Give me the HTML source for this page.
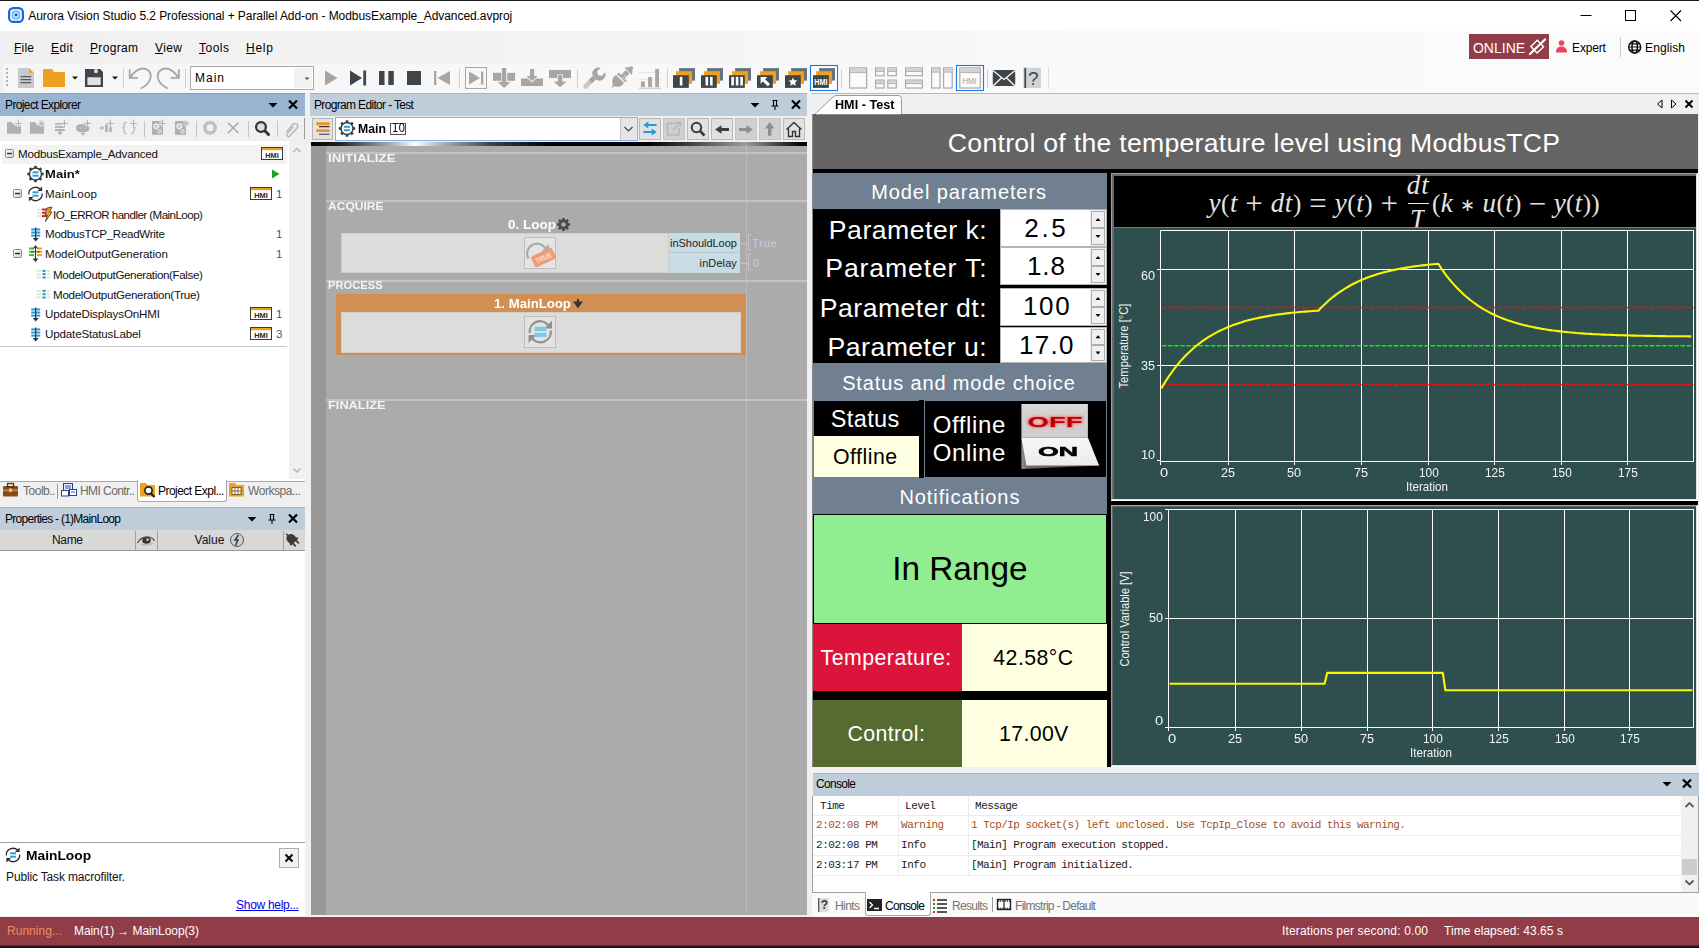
<!DOCTYPE html><html><head><meta charset="utf-8"><title>Aurora Vision Studio</title><style>
html,body{margin:0;padding:0}
body{width:1699px;height:948px;overflow:hidden;background:#f0f0f0;font-family:"Liberation Sans",sans-serif;position:relative}
div,svg.a,span.t{position:absolute;box-sizing:border-box}
span.t{white-space:nowrap;line-height:20px;height:20px}
u{text-decoration:underline;text-underline-offset:1px}
</style></head><body>
<div style="left:0px;top:0px;width:1699px;height:1px;background:#1a1a1a;"></div>
<div style="left:0px;top:1px;width:1699px;height:30px;background:#ffffff;"></div>
<div style="left:0px;top:31px;width:1699px;height:62px;background:linear-gradient(90deg,#f0f0f0 0%,#f3f3f3 30%,#f9f9f9 65%,#fbfbfb 100%);"></div>
<div style="left:1469px;top:34px;width:80px;height:25px;background:#913d47;"></div>
<div style="left:1620px;top:37px;width:1px;height:20px;background:#c9c9c9;"></div>
<div style="left:3px;top:64px;width:1045px;height:29px;background:linear-gradient(90deg,#f6f6f6,#f9f9f9);border-radius:3px;"></div>
<div style="left:190px;top:66px;width:124px;height:24px;background:#fff;border:1px solid #a9a9a9;"></div>
<div style="left:294px;top:68px;width:18px;height:20px;background:#f2f2f2;"></div>
<div style="left:0px;top:93px;width:305px;height:23px;background:#99b4d1;border-top:1px solid #8aa0bb;"></div>
<div style="left:0px;top:116px;width:305px;height:25px;background:#f0f0f0;"></div>
<div style="left:0px;top:141px;width:305px;height:340px;background:#fff;"></div>
<div style="left:289px;top:141px;width:16px;height:338px;background:#f0f0f0;"></div>
<div style="left:304px;top:118px;width:1px;height:21px;background:#9c9c9c;"></div>
<div style="left:2px;top:145px;width:285px;height:19px;background:#f3f3f3;"></div>
<div style="left:0px;top:346px;width:287px;height:1px;background:#c8c8c8;"></div>
<div style="left:0px;top:481px;width:305px;height:22px;background:#f0f0f0;"></div>
<div style="left:137px;top:480px;width:89.5px;height:22px;background:#fff;border:1px solid #a8a8a8;border-top:none;border-radius:0 0 3px 3px;"></div>
<div style="left:0px;top:481px;width:137px;height:1px;background:#a8a8a8;"></div>
<div style="left:226px;top:481px;width:79px;height:1px;background:#a8a8a8;"></div>
<div style="left:57px;top:484px;width:1px;height:15px;background:#9a9a9a;"></div>
<div style="left:0px;top:507px;width:305px;height:23px;background:#bfcddb;border-top:1px solid #a8b4c0;"></div>
<div style="left:0px;top:530px;width:305px;height:21px;background:#d8d8d8;border-bottom:1px solid #9a9a9a;"></div>
<div style="left:135px;top:531px;width:1px;height:19px;background:#a0a0a0;"></div>
<div style="left:157px;top:531px;width:1px;height:19px;background:#a0a0a0;"></div>
<div style="left:283px;top:531px;width:1px;height:19px;background:#a0a0a0;"></div>
<div style="left:0px;top:551px;width:305px;height:291px;background:#fff;"></div>
<div style="left:0px;top:842px;width:305px;height:1px;background:#a0a0a0;"></div>
<div style="left:0px;top:843px;width:305px;height:73px;background:#fff;"></div>
<div style="left:279px;top:848px;width:20px;height:20px;background:#f2f2f2;border:1px solid #adadad;"></div>
<div style="left:310px;top:93px;width:498px;height:23px;background:#bfcddb;border-top:1px solid #a8b4c0;"></div>
<div style="left:310px;top:116px;width:498px;height:26px;background:#f0f0f0;"></div>
<div style="left:312px;top:118px;width:21px;height:22px;background:#e3e3e3;border:1px solid #b5b5b5;"></div>
<div style="left:335px;top:117px;width:303px;height:24px;background:#fff;border:1px solid #7eb4ea;"></div>
<div style="left:620px;top:118px;width:17px;height:22px;background:#e6e6e6;border-left:1px solid #c0c0c0;"></div>
<div style="left:390px;top:123px;width:16px;height:12px;background:#fff;border:1px solid #555;"></div>
<div style="left:639px;top:118px;width:22px;height:22px;background:#e1e1e1;border:1px solid #b8b8b8;"></div>
<div style="left:687px;top:118px;width:22px;height:22px;background:#e1e1e1;border:1px solid #b8b8b8;"></div>
<div style="left:711px;top:118px;width:22px;height:22px;background:#e1e1e1;border:1px solid #b8b8b8;"></div>
<div style="left:783px;top:118px;width:22px;height:22px;background:#e1e1e1;border:1px solid #b8b8b8;"></div>
<div style="left:663px;top:118px;width:22px;height:22px;background:#d0d0d0;border:1px solid #c4c4c4;"></div>
<div style="left:735px;top:118px;width:22px;height:22px;background:#d0d0d0;border:1px solid #c4c4c4;"></div>
<div style="left:759px;top:118px;width:22px;height:22px;background:#d0d0d0;border:1px solid #c4c4c4;"></div>
<div style="left:311px;top:142px;width:495.5px;height:4px;background:linear-gradient(90deg,#000 0%,#222 6%,#c8c8c8 18%,#fff 21%,#c8c8c8 24.500%,#444 36%,#000 48%,#000 68%,#555 79%,#9c9c9c 87.700%,#444 94%,#000 99%,#000 100%);"></div>
<div style="left:311px;top:146px;width:496px;height:769px;background:#ababab;"></div>
<div style="left:311px;top:146px;width:15px;height:769px;background:#989898;"></div>
<div style="left:746px;top:146px;width:1px;height:769px;background:#bdbdbd;"></div>
<div style="left:326px;top:152px;width:481px;height:2px;background:#c3c3c3;"></div>
<div style="left:326px;top:200px;width:481px;height:2px;background:#c3c3c3;"></div>
<div style="left:326px;top:280px;width:481px;height:2px;background:#c3c3c3;"></div>
<div style="left:326px;top:399px;width:481px;height:2px;background:#c3c3c3;"></div>
<div style="left:807px;top:93px;width:5px;height:823px;background:#f0f0f0;"></div>
<div style="left:341px;top:233px;width:328px;height:40px;background:#dcdcda;border:1px solid #cfcfcd;"></div>
<div style="left:524px;top:237px;width:32px;height:32px;background:#e4e4e2;border:1px solid #bdbdbd;"></div>
<div style="left:669px;top:233px;width:71px;height:20px;background:#c8dce3;border-bottom:1px solid #b4c6ce;"></div>
<div style="left:669px;top:253px;width:71px;height:20px;background:#c8dce3;"></div>
<div style="left:336px;top:294px;width:409.5px;height:61px;background:#d28f54;"></div>
<div style="left:341px;top:311.5px;width:400px;height:41px;background:#dcdcda;border:1px solid #cfcfcd;"></div>
<div style="left:524px;top:316px;width:32px;height:32px;background:#e4e4e2;border:1px solid #bdbdbd;"></div>
<div style="left:812px;top:93px;width:887px;height:21px;background:#f0f0f0;border-top:1px solid #b9b9b9;"></div>
<div style="left:812px;top:114px;width:1px;height:654px;background:#8a8a8a;"></div>
<div style="left:813px;top:114px;width:885px;height:654px;background:#000;"></div>
<div style="left:813px;top:114px;width:885px;height:55px;background:#646464;"></div>
<div style="left:813px;top:173px;width:294px;height:36px;background:#708090;"></div>
<div style="left:1000px;top:209px;width:107px;height:38px;background:#fff;border:1px solid #b4b4b4;"></div>
<div style="left:1090px;top:210px;width:16px;height:36px;background:#f0f0f0;"></div>
<div style="left:1091px;top:211px;width:14px;height:17.0px;background:#f0f0f0;border:1px solid #adadad;"></div>
<div style="left:1091px;top:228.0px;width:14px;height:17.0px;background:#f0f0f0;border:1px solid #adadad;"></div>
<div style="left:1000px;top:247px;width:107px;height:38px;background:#fff;border:1px solid #b4b4b4;"></div>
<div style="left:1090px;top:248px;width:16px;height:36px;background:#f0f0f0;"></div>
<div style="left:1091px;top:249px;width:14px;height:17.0px;background:#f0f0f0;border:1px solid #adadad;"></div>
<div style="left:1091px;top:266.0px;width:14px;height:17.0px;background:#f0f0f0;border:1px solid #adadad;"></div>
<div style="left:1000px;top:288px;width:107px;height:38px;background:#fff;border:1px solid #b4b4b4;"></div>
<div style="left:1090px;top:289px;width:16px;height:36px;background:#f0f0f0;"></div>
<div style="left:1091px;top:290px;width:14px;height:17.0px;background:#f0f0f0;border:1px solid #adadad;"></div>
<div style="left:1091px;top:307.0px;width:14px;height:17.0px;background:#f0f0f0;border:1px solid #adadad;"></div>
<div style="left:1000px;top:326.5px;width:107px;height:36.5px;background:#fff;border:1px solid #b4b4b4;"></div>
<div style="left:1090px;top:327.5px;width:16px;height:34.5px;background:#f0f0f0;"></div>
<div style="left:1091px;top:328.5px;width:14px;height:16.25px;background:#f0f0f0;border:1px solid #adadad;"></div>
<div style="left:1091px;top:344.75px;width:14px;height:16.25px;background:#f0f0f0;border:1px solid #adadad;"></div>
<div style="left:813px;top:363px;width:294px;height:38px;background:#708090;"></div>
<div style="left:813px;top:401px;width:294px;height:77px;background:#708090;"></div>
<div style="left:814px;top:401px;width:105px;height:35px;background:#000;"></div>
<div style="left:814px;top:436px;width:105px;height:41px;background:#ffffe1;"></div>
<div style="left:919px;top:400px;width:5px;height:78px;background:#000;"></div>
<div style="left:925px;top:401px;width:181px;height:76px;background:#000;"></div>
<div style="left:813px;top:478px;width:294px;height:36px;background:#708090;"></div>
<div style="left:813px;top:514px;width:294px;height:110px;background:#90ee90;border:1px solid #000;"></div>
<div style="left:813px;top:624px;width:149px;height:67px;background:#dc143c;"></div>
<div style="left:962px;top:624px;width:145px;height:67px;background:#ffffe1;"></div>
<div style="left:813px;top:700px;width:149px;height:67px;background:#556b2f;"></div>
<div style="left:962px;top:700px;width:145px;height:67px;background:#ffffe1;"></div>
<div style="left:812px;top:767px;width:887px;height:6px;background:#f0f0f0;"></div>
<div style="left:1111px;top:173px;width:587px;height:328px;background:#fff;"></div>
<div style="left:1111px;top:173px;width:586px;height:327px;background:#a0a0a0;"></div>
<div style="left:1112px;top:174px;width:585px;height:326px;background:#e3e3e3;"></div>
<div style="left:1112px;top:174px;width:584px;height:325px;background:#696969;"></div>
<div style="left:1114px;top:176px;width:582px;height:52px;background:#000;"></div>
<div style="left:1114px;top:227px;width:582px;height:1px;background:#7a7a7a;"></div>
<div style="left:1114px;top:228px;width:582px;height:271px;background:#2f4f4f;"></div>
<div style="left:1111px;top:505px;width:587px;height:262px;background:#fff;"></div>
<div style="left:1111px;top:505px;width:586px;height:261px;background:#a0a0a0;"></div>
<div style="left:1112px;top:506px;width:585px;height:260px;background:#e3e3e3;"></div>
<div style="left:1112px;top:506px;width:584px;height:259px;background:#696969;"></div>
<div style="left:1113px;top:507px;width:583px;height:258px;background:#2f4f4f;"></div>
<div style="left:1407.5px;top:203px;width:21px;height:1px;background:#e8e8e8;"></div>
<div style="left:813px;top:773px;width:886px;height:23px;background:#bfcddb;border-top:1px solid #a8b4c0;"></div>
<div style="left:812px;top:796px;width:887px;height:97px;background:#fff;border:1px solid #a0a0a0;border-top:none;"></div>
<div style="left:1681px;top:796px;width:17px;height:96px;background:#f0f0f0;"></div>
<div style="left:1682px;top:858.5px;width:15px;height:16px;background:#cdcdcd;"></div>
<div style="left:813px;top:815px;width:868px;height:1px;background:#ececec;"></div>
<div style="left:813px;top:835px;width:868px;height:1px;background:#ececec;"></div>
<div style="left:813px;top:855px;width:868px;height:1px;background:#ececec;"></div>
<div style="left:813px;top:875px;width:868px;height:1px;background:#ececec;"></div>
<div style="left:898px;top:796px;width:1px;height:80px;background:#ececec;"></div>
<div style="left:968px;top:796px;width:1px;height:80px;background:#ececec;"></div>
<div style="left:812px;top:893px;width:887px;height:24px;background:#fafafa;"></div>
<div style="left:864.5px;top:892px;width:66px;height:23.5px;background:#fff;border:1px solid #a8a8a8;border-top:none;border-radius:0 0 3px 3px;"></div>
<div style="left:992px;top:897px;width:1px;height:15px;background:#9a9a9a;"></div>
<div style="left:0px;top:917px;width:1699px;height:27.5px;background:#913d47;"></div>
<div style="left:0px;top:944.5px;width:1699px;height:3.5px;background:linear-gradient(#5a4a4c,#222 35%,#111);"></div>
<svg class="a" style="left:0;top:0" width="1699" height="948" viewBox="0 0 1699 948">
<rect x="9.100" y="8.100" width="13.800" height="13.800" rx="4.200" fill="#fff" stroke="#0b6be2" stroke-width="2.200"/><rect x="11.600" y="10.600" width="8.800" height="8.800" rx="2.600" fill="#86bbf7"/><rect x="13.300" y="12.300" width="5.400" height="5.400" rx="1.800" fill="#b9d8fb"/><rect x="14.900" y="13.800" width="2.300" height="2.300" rx="0.700" fill="#1d3f8f"/>
<path d="M1580.5 15.5h11" stroke="#000" stroke-width="1" fill="none"/><rect x="1625.5" y="10.5" width="10" height="10" fill="none" stroke="#000" stroke-width="1"/><path d="M1670.5 10.5l10.5 10.5M1681 10.5l-10.5 10.5" stroke="#000" stroke-width="1.1" fill="none"/>
<g stroke="#fff" fill="none"><rect x="1532.700" y="42.200" width="9" height="9" stroke-width="1.400" transform="rotate(-44 1537.200 46.700)"/><path d="M1530 54l15-14.500" stroke-width="2.200" stroke-linecap="round"/></g>
<circle cx="1561.5" cy="43" r="2.8" fill="#f0405a"/><path d="M1556 52.5c0-4.2 2.3-6 5.5-6s5.5 1.8 5.5 6z" fill="#f0405a"/>
<g stroke="#111" stroke-width="1.500" fill="none"><circle cx="1634.700" cy="47" r="6"/><ellipse cx="1634.700" cy="47" rx="2.700" ry="6"/><path d="M1628.700 47h12M1629.800 43.800h9.800M1629.800 50.200h9.800" stroke-width="1.200"/></g>
<g fill="#b4b4b4"><rect x="6" y="68" width="2" height="2"/><rect x="6" y="72" width="2" height="2"/><rect x="6" y="76" width="2" height="2"/><rect x="6" y="80" width="2" height="2"/><rect x="6" y="84" width="2" height="2"/></g>
<path d="M18 68h11l5 5v15h-16z" fill="#c6cacf"/><path d="M29 68l5 5h-5z" fill="#eda11f"/><path d="M20.5 76.700h10.700M20.5 79.700h10.700M20.5 82.700h10.700" stroke="#3a3f45" stroke-width="1"/>
<path d="M43 69h9l2 3h11v15h-22z" fill="#eda11f"/>
<path d="M72 76.5h6l-3 3z" fill="#111"/>
<path d="M85 69h15l3 3v15h-18z" fill="#3f454a"/><rect x="94.200" y="69.300" width="3.500" height="3.600" fill="#dfe2e5"/><rect x="87.400" y="77.300" width="13.300" height="7.800" fill="#dfe2e5"/>
<path d="M112 76.5h6l-3 3z" fill="#111"/>
<path d="M123.5 69v19" stroke="#cfcfcf"/>
<g stroke="#a6a6a6" stroke-width="1.8" fill="none"><path d="M129.700 69.300v8.600h8.200"/><path d="M130.500 77.300C135 69.500 143 66.200 148 70.300C153.500 75 150.500 84 140.700 88.500"/></g>
<g stroke="#a6a6a6" stroke-width="1.8" fill="none"><path d="M178.800 69.300v8.600h-8.200"/><path d="M178 77.300C173.500 69.500 165.500 66.200 160.500 70.300C155 75 158 84 167.800 88.500"/></g>
<path d="M185.5 69v19" stroke="#cfcfcf"/>
<path d="M304.5 77.5h5l-2.5 2.5z" fill="#555"/>
<path d="M325 70.5l12.5 7.5l-12.5 7.5z" fill="#a6a6a6"/>
<path d="M350 70.5l12 7.5l-12 7.5z" fill="#3f454a"/><rect x="363.3" y="70.5" width="2.8" height="15" fill="#3f454a"/>
<rect x="379" y="71" width="5.5" height="14" fill="#3f454a"/><rect x="388.3" y="71" width="5.5" height="14" fill="#3f454a"/>
<rect x="407" y="71" width="14" height="14" fill="#3f454a"/>
<rect x="434" y="71" width="2.3" height="14" fill="#a6a6a6"/><path d="M450 71v14l-12.5-7z" fill="#a6a6a6"/>
<path d="M459.5 69v19" stroke="#cfcfcf"/>
<rect x="465.5" y="67.5" width="21" height="21" fill="#f7f7f7" stroke="#a6a6a6"/><path d="M469 71.5l11 6.5l-11 6.5z" fill="#a6a6a6"/><rect x="481" y="71.5" width="2.3" height="13" fill="#a6a6a6"/>
<g fill="#a6a6a6"><rect x="493" y="72.800" width="8.300" height="8"/><rect x="507.300" y="72.800" width="7.800" height="8"/><rect x="501.900" y="68" width="4.300" height="15"/><path d="M497.600 82h12.900l-6.450 6z"/></g>
<g fill="#a6a6a6"><rect x="521" y="78.500" width="22" height="7.500"/><path d="M526 75.500h12.200l-6.100 6z" stroke="#f7f7f7" stroke-width="1.400"/><rect x="530" y="69" width="4.200" height="8"/><path d="M526.500 76h11.200l-5.600 5z"/></g>
<g fill="#a6a6a6"><rect x="549" y="70" width="22" height="8"/><rect x="557.100" y="74.500" width="5.900" height="4" fill="#f7f7f7"/><rect x="557.800" y="75.200" width="4.500" height="7"/><path d="M553.500 81.400h13.100l-6.550 5.800z"/></g>
<path d="M577.5 69v19" stroke="#cfcfcf"/>
<path d="M585.500 86.500l7.800-7.800" stroke="#c6c6c6" stroke-width="4.600" stroke-linecap="round"/><path d="M590.500 81.500l4-4" stroke="#a6a6a6" stroke-width="4.600"/><path d="M592.300 74.500a6.300 6.300 0 0 1 8.500-6.700l-3.800 3.800l1 3.400l3.400 1l3.800-3.800a6.300 6.300 0 0 1-8.400 7.900z" fill="#a6a6a6"/>
<g fill="#a6a6a6"><path d="M611.500 87.800l1.300-3.300a7.500 7.500 0 0 1 3.200-9.500l8 8a7.500 7.500 0 0 1-9.500 3.200z"/><path d="M617.200 74.200l1.600-1.600l8 8l-1.600 1.600z"/><path d="M620.500 75.500l5.500-5.500l3.500 3.500l-5.500 5.500z"/><path d="M624.500 67.500l8.300-.8l-.8 8.300z"/><path d="M630.500 66.500l2.300 2.300" stroke="#a6a6a6" stroke-width="1.500"/></g><path d="M621.500 76.700l3 3M623.500 74.700l3 3" stroke="#f7f7f7" stroke-width="0.900"/>
<path d="M639 72.600h22M639 79.700h22" stroke="#dedede" stroke-width="0.800"/><g fill="#a6a6a6"><rect x="641" y="81.400" width="3.800" height="5.600"/><rect x="648.100" y="77" width="3.800" height="10"/><rect x="655.200" y="69" width="3.800" height="18"/></g><rect x="639" y="87.600" width="22" height="1.300" fill="#c9c9c9"/>
<path d="M667.5 69v19" stroke="#cfcfcf"/>
<rect x="810.500" y="65.500" width="27" height="25" fill="#fbfcfe" stroke="#1a7ae0" stroke-width="1.100"/>
<rect x="679.1" y="68.100" width="15.900" height="12.500" fill="#69727a"/><rect x="676.1" y="71.200" width="15.900" height="12.600" fill="#eda11f"/><rect x="673" y="75.200" width="15.800" height="12.700" fill="#3f454a"/><rect x="679.80" y="76.900" width="2.6" height="8.600" fill="#fff"/>
<rect x="707.1" y="68.100" width="15.900" height="12.500" fill="#69727a"/><rect x="704.1" y="71.200" width="15.900" height="12.600" fill="#eda11f"/><rect x="701" y="75.200" width="15.800" height="12.700" fill="#3f454a"/><rect x="705.55" y="76.900" width="2.6" height="8.600" fill="#fff"/><rect x="710.05" y="76.900" width="2.6" height="8.600" fill="#fff"/>
<rect x="735.1" y="68.100" width="15.900" height="12.500" fill="#69727a"/><rect x="732.1" y="71.200" width="15.900" height="12.600" fill="#eda11f"/><rect x="729" y="75.200" width="15.800" height="12.700" fill="#3f454a"/><rect x="731.30" y="76.900" width="2.6" height="8.600" fill="#fff"/><rect x="735.80" y="76.900" width="2.6" height="8.600" fill="#fff"/><rect x="740.30" y="76.900" width="2.6" height="8.600" fill="#fff"/>
<rect x="763.1" y="68.100" width="15.900" height="12.500" fill="#69727a"/><rect x="760.1" y="71.200" width="15.900" height="12.600" fill="#eda11f"/><rect x="757" y="75.200" width="15.800" height="12.700" fill="#3f454a"/><path d="M760.6 76.900h6.800l-2.300 2.300l4.900 4.900l-2.200 2.200l-4.900-4.900l-2.300 2.300z" fill="#fff"/>
<rect x="791.1" y="68.100" width="15.900" height="12.500" fill="#69727a"/><rect x="788.1" y="71.200" width="15.900" height="12.600" fill="#eda11f"/><rect x="785" y="75.200" width="15.800" height="12.700" fill="#3f454a"/><path d="M793 77.400l1.300 2.900l3.100.3l-2.300 2.100l.7 3.100l-2.800-1.600l-2.800 1.600l.7-3.100l-2.300-2.100l3.100-.3z" fill="#fff"/>
<rect x="819.1" y="68.100" width="15.900" height="12.500" fill="#69727a"/><rect x="816.1" y="71.200" width="15.900" height="12.600" fill="#eda11f"/><rect x="813" y="75.200" width="15.800" height="12.700" fill="#3f454a"/><rect x="813" y="76" width="15.800" height="1" fill="#3f454a"/><text x="820.9" y="85.200" font-family='"Liberation Sans",sans-serif' font-size="8.400" font-weight="700" fill="#fff" text-anchor="middle" textLength="13.200" lengthAdjust="spacingAndGlyphs">HMI</text>
<path d="M841.500 69v19" stroke="#cfcfcf"/>
<rect x="849.6" y="67.89999999999999" width="17.0" height="20.1" fill="#fbfbfb" stroke="#a9a9a9" stroke-width="1.200"/><rect x="850.2" y="68.5" width="15.799999999999999" height="3.7" fill="#d3d3d3"/><path d="M850 72.60000000000001h16.2" stroke="#a9a9a9" stroke-width="0.900"/>
<rect x="875.6" y="67.89999999999999" width="8.5" height="7.8" fill="#fbfbfb" stroke="#a9a9a9" stroke-width="1.200"/><rect x="876.2" y="68.5" width="7.299999999999999" height="2.5" fill="#d3d3d3"/><path d="M876 71.4h7.699999999999999" stroke="#a9a9a9" stroke-width="0.900"/><rect x="887.8000000000001" y="67.89999999999999" width="8.5" height="7.8" fill="#fbfbfb" stroke="#a9a9a9" stroke-width="1.200"/><rect x="888.4000000000001" y="68.5" width="7.299999999999999" height="2.5" fill="#d3d3d3"/><path d="M888.2 71.4h7.699999999999999" stroke="#a9a9a9" stroke-width="0.900"/><rect x="875.6" y="80.1" width="8.5" height="7.8999999999999995" fill="#fbfbfb" stroke="#a9a9a9" stroke-width="1.200"/><rect x="876.2" y="80.7" width="7.299999999999999" height="2.5" fill="#d3d3d3"/><path d="M876 83.60000000000001h7.699999999999999" stroke="#a9a9a9" stroke-width="0.900"/><rect x="887.8000000000001" y="80.1" width="8.5" height="7.8999999999999995" fill="#fbfbfb" stroke="#a9a9a9" stroke-width="1.200"/><rect x="888.4000000000001" y="80.7" width="7.299999999999999" height="2.5" fill="#d3d3d3"/><path d="M888.2 83.60000000000001h7.699999999999999" stroke="#a9a9a9" stroke-width="0.900"/>
<rect x="905.6" y="67.89999999999999" width="16.8" height="7.8" fill="#fbfbfb" stroke="#a9a9a9" stroke-width="1.200"/><rect x="906.2" y="68.5" width="15.6" height="2.5" fill="#d3d3d3"/><path d="M906 71.4h16" stroke="#a9a9a9" stroke-width="0.900"/><rect x="905.6" y="80.1" width="16.8" height="7.8999999999999995" fill="#fbfbfb" stroke="#a9a9a9" stroke-width="1.200"/><rect x="906.2" y="80.7" width="15.6" height="2.5" fill="#d3d3d3"/><path d="M906 83.60000000000001h16" stroke="#a9a9a9" stroke-width="0.900"/>
<rect x="931.6" y="67.89999999999999" width="8.4" height="20.1" fill="#fbfbfb" stroke="#a9a9a9" stroke-width="1.200"/><rect x="932.2" y="68.5" width="7.199999999999999" height="3.2" fill="#d3d3d3"/><path d="M932 72.10000000000001h7.6" stroke="#a9a9a9" stroke-width="0.900"/><rect x="943.6" y="67.89999999999999" width="8.600000000000001" height="20.1" fill="#fbfbfb" stroke="#a9a9a9" stroke-width="1.200"/><rect x="944.2" y="68.5" width="7.4" height="3.2" fill="#d3d3d3"/><path d="M944 72.10000000000001h7.800000000000001" stroke="#a9a9a9" stroke-width="0.900"/>
<rect x="956.500" y="65.500" width="27" height="25" fill="#fbfcfe" stroke="#1a7ae0" stroke-width="1.100"/>
<rect x="959.8000000000001" y="67.89999999999999" width="20.5" height="20.1" fill="#fbfbfb" stroke="#a9a9a9" stroke-width="1.200"/><rect x="960.4000000000001" y="68.5" width="19.3" height="3.7" fill="#d3d3d3"/><path d="M960.2 72.60000000000001h19.7" stroke="#a9a9a9" stroke-width="0.900"/><text x="969.500" y="84.200" font-family='"Liberation Sans",sans-serif' font-size="9.300" fill="#a2a2a2" text-anchor="middle" textLength="14" lengthAdjust="spacingAndGlyphs">HMI</text>
<path d="M987.500 69v19" stroke="#cfcfcf"/>
<rect x="992.800" y="70" width="22.400" height="16" rx="2" fill="#3f454a"/><path d="M993.500 71l10.500 8.500l10.500-8.500M993.500 85.500l7.800-7.500M1014.500 85.500l-7.800-7.500" stroke="#fafafa" stroke-width="1.300" fill="none"/>
<rect x="1023.300" y="67.800" width="17.700" height="20.200" fill="#cfd3d6"/><rect x="1024.400" y="67.800" width="1.700" height="20.200" fill="#3f454a"/>
<path d="M1048.5 67v22" stroke="#e0e0e0"/>
<path d="M268.5 103h9l-4.500 4.500z" fill="#000"/>
<path d="M289 100.500l8 8M297 100.500l-8 8" stroke="#000" stroke-width="2.200" fill="none"/>
<path d="M7 122h4.500l3.500 3.500h6v8.200h-14z" fill="#b0b0b0"/><path d="M18.4 119.7v7.4M14.999999999999998 123.4h6.800" stroke="#f0f0f0" stroke-width="2.600" fill="none"/><path d="M18.4 119.7v7.4M14.999999999999998 123.4h6.800" stroke="#b0b0b0" stroke-width="1" fill="none"/>
<path d="M30 122h4.500l3.500 3.500h6v8.200h-14z" fill="#b0b0b0"/><g stroke="#f0f0f0" stroke-width="2.200"><path d="M41.400 120.300v6.400M38.200 123.500h6.400"/></g><g stroke="#b0b0b0" stroke-width="0.800"><path d="M41.400 120.300v6.400M38.200 123.500h6.400M39.200 121.300l4.400 4.400M43.600 121.300l-4.400 4.400"/></g>
<g fill="#b0b0b0"><rect x="55" y="123" width="9.800" height="1.600"/><rect x="55" y="125.900" width="9.800" height="2"/><rect x="55" y="129" width="9.800" height="2"/><path d="M57.500 132h5l-2.500 3.200z"/><rect x="59.300" y="130" width="1.400" height="3"/></g><path d="M64.4 119.7v7.4M61.00000000000001 123.4h6.800" stroke="#f0f0f0" stroke-width="2.600" fill="none"/><path d="M64.4 119.7v7.4M61.00000000000001 123.4h6.800" stroke="#b0b0b0" stroke-width="1" fill="none"/>
<rect x="76" y="124.300" width="13.400" height="7.600" rx="3.800" fill="#b0b0b0"/><circle cx="80.500" cy="128.100" r="1.100" fill="#c4c4c4"/><circle cx="84.500" cy="128.100" r="1.100" fill="#c4c4c4"/><path d="M80.400 132.800h5l-2.500 3z" fill="#b0b0b0"/><path d="M87.4 119.7v7.4M84.0 123.4h6.800" stroke="#f0f0f0" stroke-width="2.600" fill="none"/><path d="M87.4 119.7v7.4M84.0 123.4h6.800" stroke="#b0b0b0" stroke-width="1" fill="none"/>
<g fill="#b0b0b0"><path d="M98.800 127.400h2.600v-1.800l2.700 2.300l-2.700 2.300v-1.800h-2.600z"/><rect x="105.100" y="124.300" width="2.700" height="7.600"/><rect x="109.100" y="127.400" width="2.700" height="4.500"/></g><path d="M110.4 119.7v7.4M107.0 123.4h6.800" stroke="#f0f0f0" stroke-width="2.600" fill="none"/><path d="M110.4 119.7v7.4M107.0 123.4h6.800" stroke="#b0b0b0" stroke-width="1" fill="none"/><path d="M110.400 123v5" stroke="#b0b0b0" stroke-width="1"/>
<g fill="none" stroke="#b0b0b0" stroke-width="1.100"><path d="M126.800 122.300c-2.200 0-2.600 .8-2.600 2.400v1.600c0 1.200-.6 1.700-2 1.700c1.400 0 2 .5 2 1.700v1.600c0 1.600 .4 2.400 2.600 2.400"/><path d="M131.200 122.300c2.200 0 2.600 .8 2.600 2.400v1.600c0 1.200 .6 1.700 2 1.700c-1.400 0-2 .5-2 1.700v1.600c0 1.600-.4 2.400-2.600 2.400"/></g><path d="M133.5 119.7v7.4M130.1 123.4h6.800" stroke="#f0f0f0" stroke-width="2.600" fill="none"/><path d="M133.5 119.7v7.4M130.1 123.4h6.800" stroke="#b0b0b0" stroke-width="1" fill="none"/>
<path d="M144.500 121v16" stroke="#c4c4c4"/>
<rect x="152" y="121" width="11" height="13.800" fill="#b0b0b0"/><circle cx="156.3" cy="126.300" r="2.300" fill="none" stroke="#f4f4f4" stroke-width="1.700" stroke-dasharray="1.300 0.500"/><circle cx="156.3" cy="126.300" r="1.700" fill="none" stroke="#f4f4f4" stroke-width="1"/><circle cx="159.6" cy="131.300" r="1.500" fill="none" stroke="#f4f4f4" stroke-width="1.300" stroke-dasharray="1 0.400"/><path d="M162.5 119.7v7.4M159.1 123.4h6.800" stroke="#f0f0f0" stroke-width="2.600" fill="none"/><path d="M162.5 119.7v7.4M159.1 123.4h6.800" stroke="#b0b0b0" stroke-width="1" fill="none"/>
<rect x="175" y="121" width="11" height="13.800" fill="#b0b0b0"/><circle cx="179.3" cy="126.300" r="2.300" fill="none" stroke="#f4f4f4" stroke-width="1.700" stroke-dasharray="1.300 0.500"/><circle cx="179.3" cy="126.300" r="1.700" fill="none" stroke="#f4f4f4" stroke-width="1"/><circle cx="182.6" cy="131.300" r="1.500" fill="none" stroke="#f4f4f4" stroke-width="1.300" stroke-dasharray="1 0.400"/><g stroke="#f0f0f0" stroke-width="2.200"><path d="M186 120.300v6.400M182.800 123.500h6.400"/></g><g stroke="#b0b0b0" stroke-width="0.800"><path d="M186 120.300v6.400M182.800 123.500h6.400M183.800 121.300l4.400 4.400M188.200 121.300l-4.400 4.400"/></g>
<path d="M196.500 121v16" stroke="#c4c4c4"/>
<g fill="#bdbdbd"><circle cx="210" cy="127.8" r="5.46"/><rect x="208.60" y="120.80" width="2.80" height="3.50" transform="rotate(0.0 210 127.8)"/><rect x="208.60" y="120.80" width="2.80" height="3.50" transform="rotate(30.0 210 127.8)"/><rect x="208.60" y="120.80" width="2.80" height="3.50" transform="rotate(60.0 210 127.8)"/><rect x="208.60" y="120.80" width="2.80" height="3.50" transform="rotate(90.0 210 127.8)"/><rect x="208.60" y="120.80" width="2.80" height="3.50" transform="rotate(120.0 210 127.8)"/><rect x="208.60" y="120.80" width="2.80" height="3.50" transform="rotate(150.0 210 127.8)"/><rect x="208.60" y="120.80" width="2.80" height="3.50" transform="rotate(180.0 210 127.8)"/><rect x="208.60" y="120.80" width="2.80" height="3.50" transform="rotate(210.0 210 127.8)"/><rect x="208.60" y="120.80" width="2.80" height="3.50" transform="rotate(240.0 210 127.8)"/><rect x="208.60" y="120.80" width="2.80" height="3.50" transform="rotate(270.0 210 127.8)"/><rect x="208.60" y="120.80" width="2.80" height="3.50" transform="rotate(300.0 210 127.8)"/><rect x="208.60" y="120.80" width="2.80" height="3.50" transform="rotate(330.0 210 127.8)"/></g><circle cx="210" cy="127.8" r="3.500" fill="#f0f0f0"/>
<path d="M228 122.800l10.300 10.200M238.300 122.800l-10.300 10.200" stroke="#aaaaaa" stroke-width="1.600"/>
<path d="M248.500 121v16" stroke="#c4c4c4"/>
<circle cx="261" cy="127" r="4.900" fill="#dedede" stroke="#333" stroke-width="2.300"/><path d="M264.800 130.800l3.700 3.700" stroke="#333" stroke-width="3" stroke-linecap="round"/>
<path d="M277.500 121v16" stroke="#c4c4c4"/>
<path d="M286.500 132l6.500-7.500a2.600 2.600 0 0 1 4 3.500l-7 8a1.700 1.700 0 0 1-2.700-2.200l6-7" fill="none" stroke="#b0b0b0" stroke-width="1.300"/>
<path d="M293.500 152l3.500-3.500l3.500 3.500" fill="none" stroke="#b4b4b4" stroke-width="1.500"/><path d="M293.500 468.500l3.500 3.500l3.500-3.500" fill="none" stroke="#b4b4b4" stroke-width="1.500"/>
<defs><linearGradient id="gPm" x1="0" y1="0" x2="1" y2="1"><stop offset="0" stop-color="#fff"/><stop offset="1" stop-color="#d0d0d0"/></linearGradient></defs>
<rect x="5.5" y="149.5" width="8" height="8" rx="1" fill="url(#gPm)" stroke="#8a8a8a"/><path d="M7 153.5h5" stroke="#222" stroke-width="1.300"/>
<rect x="13.5" y="189.5" width="8" height="8" rx="1" fill="url(#gPm)" stroke="#8a8a8a"/><path d="M15 193.5h5" stroke="#222" stroke-width="1.300"/>
<rect x="13.5" y="249.5" width="8" height="8" rx="1" fill="url(#gPm)" stroke="#8a8a8a"/><path d="M15 253.5h5" stroke="#222" stroke-width="1.300"/>
<rect x="261.5" y="147.5" width="21" height="12" fill="#fff" stroke="#3a3a3a"/><rect x="262" y="148" width="20" height="2.200" fill="#eda11f"/><text x="272" y="158" font-family='"Liberation Sans",sans-serif' font-size="8" font-weight="700" fill="#222" text-anchor="middle" textLength="13.500" lengthAdjust="spacingAndGlyphs">HMI</text>
<rect x="250.5" y="187.5" width="21" height="12" fill="#fff" stroke="#3a3a3a"/><rect x="251" y="188" width="20" height="2.200" fill="#eda11f"/><text x="261" y="198" font-family='"Liberation Sans",sans-serif' font-size="8" font-weight="700" fill="#222" text-anchor="middle" textLength="13.500" lengthAdjust="spacingAndGlyphs">HMI</text>
<rect x="250.5" y="307.5" width="21" height="12" fill="#fff" stroke="#3a3a3a"/><rect x="251" y="308" width="20" height="2.200" fill="#eda11f"/><text x="261" y="318" font-family='"Liberation Sans",sans-serif' font-size="8" font-weight="700" fill="#222" text-anchor="middle" textLength="13.500" lengthAdjust="spacingAndGlyphs">HMI</text>
<rect x="250.5" y="327.5" width="21" height="12" fill="#fff" stroke="#3a3a3a"/><rect x="251" y="328" width="20" height="2.200" fill="#eda11f"/><text x="261" y="338" font-family='"Liberation Sans",sans-serif' font-size="8" font-weight="700" fill="#222" text-anchor="middle" textLength="13.500" lengthAdjust="spacingAndGlyphs">HMI</text>
<path d="M272 169.500l7.500 4.500l-7.500 4.500z" fill="#1f9d2c"/>
<rect x="34.20" y="165.80" width="2.600" height="2.400" fill="#3a3a3a" transform="rotate(0 35.5 174)"/><rect x="34.20" y="165.80" width="2.600" height="2.400" fill="#3a3a3a" transform="rotate(45 35.5 174)"/><rect x="34.20" y="165.80" width="2.600" height="2.400" fill="#3a3a3a" transform="rotate(90 35.5 174)"/><rect x="34.20" y="165.80" width="2.600" height="2.400" fill="#3a3a3a" transform="rotate(135 35.5 174)"/><rect x="34.20" y="165.80" width="2.600" height="2.400" fill="#3a3a3a" transform="rotate(180 35.5 174)"/><rect x="34.20" y="165.80" width="2.600" height="2.400" fill="#3a3a3a" transform="rotate(225 35.5 174)"/><rect x="34.20" y="165.80" width="2.600" height="2.400" fill="#3a3a3a" transform="rotate(270 35.5 174)"/><rect x="34.20" y="165.80" width="2.600" height="2.400" fill="#3a3a3a" transform="rotate(315 35.5 174)"/><circle cx="35.5" cy="174" r="6" fill="#fff" stroke="#3a3a3a" stroke-width="1.400"/><rect x="32.5" y="171.3" width="6" height="2" fill="#2aa0dc"/><rect x="32.5" y="174.7" width="6" height="2" fill="#2aa0dc"/>
<g fill="none" stroke="#333" stroke-width="1.300"><path d="M28.8 194.5a6.700 6.700 0 0 1 11.600-5"/><path d="M42.2 193.5a6.700 6.700 0 0 1-11.600 5"/></g><path d="M42.1 186.4v4.600h-4.600z" fill="#333"/><path d="M28.9 201.6v-4.600h4.600z" fill="#333"/><rect x="32.5" y="191.3" width="6" height="2" fill="#2aa0dc"/><rect x="32.5" y="194.7" width="6" height="2" fill="#2aa0dc"/>
<g fill="#d6f0d0"><rect x="37" y="208.500" width="5" height="2"/><rect x="37" y="211.800" width="5" height="2"/><rect x="37" y="215.100" width="5" height="2"/></g><g fill="#d8232a"><rect x="42" y="208.500" width="7" height="2"/><rect x="42" y="211.800" width="6" height="2"/><rect x="42" y="215.100" width="5" height="2"/></g><path d="M47 208l5-1l-2.500 5h2.500l-6.500 9.500l1.800-6.500h-2.300z" fill="#eda11f" stroke="#333" stroke-width="0.800"/>
<g fill="#2a9ad4"><rect x="31.2" y="228.4" width="9" height="2"/><rect x="31.2" y="231.5" width="9" height="2"/><rect x="31.2" y="234.6" width="9" height="2"/></g><path d="M35.7 227.5v11.500" stroke="#333" stroke-width="1.200"/><path d="M32.7 238h6l-3 3.500z" fill="#333"/>
<g fill="#4db848"><rect x="29" y="247.500" width="5" height="2"/><rect x="29" y="250.800" width="5" height="2"/><rect x="29" y="254.100" width="5" height="2"/></g><g fill="#eda11f"><rect x="37" y="247.500" width="5" height="2"/><rect x="37" y="250.800" width="5" height="2"/><rect x="37" y="254.100" width="5" height="2"/></g><path d="M35.500 246v14M33.500 248.500l2 -2.500l2 2.500" stroke="#333" stroke-width="1.100" fill="none"/><path d="M32.500 258.500h6l-3 3.500z" fill="#333"/><path d="M31 251.800h9" stroke="#333" stroke-width="0.800"/>
<g fill="#2a9ad4"><rect x="42.5" y="269.9" width="3.200" height="2"/><rect x="42.5" y="273.2" width="3.200" height="2"/><rect x="42.5" y="276.5" width="3.200" height="2"/></g><g fill="#d6f0d0"><rect x="36.5" y="269.9" width="4.500" height="2"/><rect x="36.5" y="273.2" width="4.500" height="2"/><rect x="36.5" y="276.5" width="4.500" height="2"/><rect x="47.0" y="269.9" width="3" height="2"/><rect x="47.0" y="273.2" width="3" height="2"/><rect x="47.0" y="276.5" width="3" height="2"/></g>
<g fill="#2a9ad4"><rect x="42.5" y="289.9" width="3.200" height="2"/><rect x="42.5" y="293.2" width="3.200" height="2"/><rect x="42.5" y="296.5" width="3.200" height="2"/></g><g fill="#d6f0d0"><rect x="36.5" y="289.9" width="4.500" height="2"/><rect x="36.5" y="293.2" width="4.500" height="2"/><rect x="36.5" y="296.5" width="4.500" height="2"/><rect x="47.0" y="289.9" width="3" height="2"/><rect x="47.0" y="293.2" width="3" height="2"/><rect x="47.0" y="296.5" width="3" height="2"/></g>
<g fill="#2a9ad4"><rect x="31.2" y="308.4" width="9" height="2"/><rect x="31.2" y="311.5" width="9" height="2"/><rect x="31.2" y="314.6" width="9" height="2"/></g><path d="M35.7 307.5v11.500" stroke="#333" stroke-width="1.200"/><path d="M32.7 318h6l-3 3.500z" fill="#333"/>
<g fill="#2a9ad4"><rect x="31.2" y="328.4" width="9" height="2"/><rect x="31.2" y="331.5" width="9" height="2"/><rect x="31.2" y="334.6" width="9" height="2"/></g><path d="M35.7 327.5v11.500" stroke="#333" stroke-width="1.200"/><path d="M32.7 338h6l-3 3.500z" fill="#333"/>
<rect x="3" y="486" width="15" height="10.500" rx="1" fill="#8a4a1c"/><rect x="7.500" y="483.500" width="6" height="3.500" fill="none" stroke="#5a2e10" stroke-width="1.300"/><rect x="3" y="489.500" width="15" height="1.600" fill="#c98a4a"/><rect x="9" y="488.500" width="3" height="3.500" fill="#f0c070"/>
<rect x="63.500" y="483.500" width="9" height="8" fill="#e8eefc" stroke="#2a3f9a"/><rect x="61.500" y="490.500" width="7" height="5.500" fill="#fff" stroke="#2a3f9a"/><rect x="69.500" y="489.500" width="7" height="6" fill="#fff" stroke="#2a3f9a"/><path d="M65 486h6M65 488h6M71 492h4" stroke="#2a3f9a" stroke-width="0.900"/>
<path d="M140 483h6l1.500 2h7.500v11.500h-15z" fill="#eda11f"/><circle cx="148.500" cy="490.500" r="3.600" fill="#fff" stroke="#222" stroke-width="1.700"/><path d="M151 493.500l3.500 3.500" stroke="#222" stroke-width="2.200"/>
<path d="M229 483h6l1.500 2h7.500v11.500h-15z" fill="#eda11f"/><rect x="232" y="487.500" width="9" height="7" fill="#fff" stroke="#6a4a10" stroke-width="0.800"/><path d="M235 487.500v7M238 487.500v7M232 491h9" stroke="#6a4a10" stroke-width="0.800"/>
<path d="M247.500 517h9l-4.500 4.500z" fill="#000"/>
<path d="M269.500 514.500h5M270.500 514.500v5.500M273.500 514.500v5.500M268.500 520h7M272 520v4" stroke="#000" stroke-width="1.100" fill="none"/>
<path d="M289 514.500l8 8M297 514.500l-8 8" stroke="#000" stroke-width="2.200" fill="none"/>
<path d="M137.500 543c3-5 8-7 13-5.500c2 .6 3.500 2 4 3.500" fill="none" stroke="#444" stroke-width="1.100"/><ellipse cx="146.500" cy="540.500" rx="4.200" ry="3.200" fill="#333"/><circle cx="147.500" cy="539.800" r="1.200" fill="#ddd"/><path d="M141 544c3 1.500 8 1.500 12-1" fill="none" stroke="#999" stroke-width="0.800"/>
<circle cx="237" cy="540" r="6.500" fill="#d0d0d0" stroke="#555" stroke-width="1"/><path d="M238.500 535l-3.500 5h3l-2.500 5.500" fill="none" stroke="#333" stroke-width="1.400"/>
<g transform="rotate(-45 293 540.500)" fill="#3a3a3a"><path d="M288.500 537.500a4.500 4.500 0 0 1 9 0v4.500h-9z"/><rect x="287.700" y="541" width="10.600" height="1.800"/><rect x="290" y="542.500" width="1.700" height="4.200"/><rect x="294.300" y="542.500" width="1.700" height="4.200"/><rect x="292.300" y="531" width="1.400" height="3"/></g>
<g fill="none" stroke="#2b2b2b" stroke-width="1.300"><path d="M6.3 855.5a6.700 6.700 0 0 1 11.600-5"/><path d="M19.7 854.5a6.700 6.700 0 0 1-11.600 5"/></g><path d="M19.6 847.4v4.600h-4.600z" fill="#2b2b2b"/><path d="M6.4 862.6v-4.600h4.600z" fill="#2b2b2b"/><rect x="10" y="852.3" width="6" height="2" fill="#2aa0dc"/><rect x="10" y="855.7" width="6" height="2" fill="#2aa0dc"/>
<path d="M285.500 854.500l7 7M292.500 854.500l-7 7" stroke="#000" stroke-width="1.900" fill="none"/>
<path d="M750.500 103h9l-4.500 4.500z" fill="#000"/>
<path d="M772.500 100.500h5M773.500 100.500v5.500M776.500 100.500v5.500M771.500 106h7M775 106v4" stroke="#000" stroke-width="1.100" fill="none"/>
<path d="M792 100.500l8 8M800 100.500l-8 8" stroke="#000" stroke-width="2.200" fill="none"/>
<path d="M316.200 123.800h13.500M316.200 130.600h13.500" stroke="#ee9420" stroke-width="2.900"/><path d="M319 126.600h10.500M319 134.200h10.500" stroke="#333" stroke-width="1.100"/>
<path d="M624.500 127l4 4l4-4" fill="none" stroke="#444" stroke-width="1.200"/>
<rect x="345.70" y="120.30" width="2.600" height="2.400" fill="#3a3a3a" transform="rotate(0 347 128.5)"/><rect x="345.70" y="120.30" width="2.600" height="2.400" fill="#3a3a3a" transform="rotate(45 347 128.5)"/><rect x="345.70" y="120.30" width="2.600" height="2.400" fill="#3a3a3a" transform="rotate(90 347 128.5)"/><rect x="345.70" y="120.30" width="2.600" height="2.400" fill="#3a3a3a" transform="rotate(135 347 128.5)"/><rect x="345.70" y="120.30" width="2.600" height="2.400" fill="#3a3a3a" transform="rotate(180 347 128.5)"/><rect x="345.70" y="120.30" width="2.600" height="2.400" fill="#3a3a3a" transform="rotate(225 347 128.5)"/><rect x="345.70" y="120.30" width="2.600" height="2.400" fill="#3a3a3a" transform="rotate(270 347 128.5)"/><rect x="345.70" y="120.30" width="2.600" height="2.400" fill="#3a3a3a" transform="rotate(315 347 128.5)"/><circle cx="347" cy="128.5" r="6" fill="#fff" stroke="#3a3a3a" stroke-width="1.400"/><rect x="344" y="125.8" width="6" height="2" fill="#2aa0dc"/><rect x="344" y="129.2" width="6" height="2" fill="#2aa0dc"/>
<g fill="#1f9be4"><path d="M643.300 125l5-3.600v2.500h8.300v2.200h-8.300v2.500z"/><path d="M656.700 132l-5-3.600v2.500h-8.300v2.200h8.300v2.500z"/></g>
<g stroke="#b5b5b5" stroke-width="1.500" fill="none"><path d="M676 123.500h-8.500v11.500h11.500v-7"/><path d="M673 130l7-7M676 122.500h4.500v4.500" /></g>
<circle cx="696.500" cy="127.500" r="4.700" fill="none" stroke="#3a3a3a" stroke-width="2"/><path d="M700 131l4.500 4.500" stroke="#3a3a3a" stroke-width="2.600"/>
<path d="M715 129.500l6.500-4.300v2.800h7.500v3h-7.500v2.800z" fill="#3a3f44"/>
<path d="M753 129.500l-6.500-4.300v2.800h-7.500v3h7.500v2.800z" fill="#8e8e8e"/>
<path d="M769.700 122l4.700 6.500h-3v7.300h-3.400v-7.300h-3z" fill="#8e8e8e"/>
<path d="M786.500 129.500l7.500-7l7.500 7M788.500 128.500v8h4v-5h3v5h4v-8" fill="none" stroke="#333" stroke-width="1.400"/>
<g fill="#4a4a4a"><circle cx="563.5" cy="224.5" r="5.07"/><rect x="562.20" y="218.00" width="2.60" height="3.25" transform="rotate(0.0 563.5 224.5)"/><rect x="562.20" y="218.00" width="2.60" height="3.25" transform="rotate(45.0 563.5 224.5)"/><rect x="562.20" y="218.00" width="2.60" height="3.25" transform="rotate(90.0 563.5 224.5)"/><rect x="562.20" y="218.00" width="2.60" height="3.25" transform="rotate(135.0 563.5 224.5)"/><rect x="562.20" y="218.00" width="2.60" height="3.25" transform="rotate(180.0 563.5 224.5)"/><rect x="562.20" y="218.00" width="2.60" height="3.25" transform="rotate(225.0 563.5 224.5)"/><rect x="562.20" y="218.00" width="2.60" height="3.25" transform="rotate(270.0 563.5 224.5)"/><rect x="562.20" y="218.00" width="2.60" height="3.25" transform="rotate(315.0 563.5 224.5)"/></g><circle cx="563.5" cy="224.5" r="2.34" fill="#ababab"/>
<path d="M528.500 258.500a9.500 9.500 0 0 1 17-10" fill="none" stroke="#a9a9a9" stroke-width="2.200"/><path d="M549 244v7.500h-7.500z" fill="#a9a9a9"/><g transform="rotate(-25 543.500 257.500)"><rect x="532" y="251.500" width="23" height="12" rx="2" fill="#ee9b78"/><text x="543.500" y="260.500" font-family='"Liberation Sans",sans-serif' font-size="7.500" font-weight="700" fill="#fbe3d6" text-anchor="middle" textLength="17" lengthAdjust="spacingAndGlyphs">TRUE</text></g>
<path d="M740.500 243.500h8M751.500 234.500h-3v15.500h3M740.500 263.500h8M751.500 254.500h-3v15.500h3" stroke="#c4c4c4" fill="none"/>
<path d="M578 299v4.500M575 302.500h6l-3 4z" stroke="#333" stroke-width="2" fill="#333"/>
<g fill="none" stroke="#909090" stroke-width="2.300"><path d="M529.700 333a10.500 10.500 0 0 1 18.500-8"/><path d="M550.800 330.500a10.500 10.500 0 0 1-18.500 8"/></g><path d="M552 320.500v8h-8z" fill="#909090"/><path d="M528.500 343v-8h8z" fill="#909090"/><rect x="534.500" y="326.800" width="12" height="4.200" fill="#7fc8ec"/><rect x="534.500" y="332.800" width="12" height="4.200" fill="#7fc8ec"/>
<path d="M815.500 113.500l17.500-16.500q1.500-1.500 4-1.500h61.500q3 0 3 3v15z" fill="#fff" stroke="#9a9a9a" stroke-width="1"/><path d="M816 113.500h85" stroke="#fff" stroke-width="1.500"/>
<path d="M1662 100l-4.500 4l4.500 4z" fill="none" stroke="#000" stroke-width="1"/><path d="M1671.500 100l4.500 4l-4.500 4z" fill="none" stroke="#000" stroke-width="1"/><path d="M1685.500 100.500l7 7M1692.500 100.500l-7 7" stroke="#000" stroke-width="2" fill="none"/>
<path d="M1095.500 221.0l2.500-3l2.500 3z" fill="#000"/><path d="M1095.500 235.0l2.500 3l2.500-3z" fill="#000"/>
<path d="M1095.500 259.0l2.500-3l2.500 3z" fill="#000"/><path d="M1095.500 273.0l2.500 3l2.500-3z" fill="#000"/>
<path d="M1095.500 300.0l2.500-3l2.500 3z" fill="#000"/><path d="M1095.500 314.0l2.500 3l2.500-3z" fill="#000"/>
<path d="M1095.500 338.125l2.500-3l2.500 3z" fill="#000"/><path d="M1095.500 351.375l2.500 3l2.500-3z" fill="#000"/>
<defs><linearGradient id="gOff" x1="0" y1="0" x2="0" y2="1"><stop offset="0" stop-color="#dcdada"/><stop offset="0.3" stop-color="#d2d0d0"/><stop offset="1" stop-color="#cfcdcd"/></linearGradient><linearGradient id="gOn" x1="0" y1="0" x2="0" y2="1"><stop offset="0" stop-color="#f6f6f6"/><stop offset="1" stop-color="#ececec"/></linearGradient><linearGradient id="gSide" x1="0" y1="0" x2="1" y2="0"><stop offset="0" stop-color="#8e8e8e"/><stop offset="0.08" stop-color="#707070"/><stop offset="1" stop-color="#4a4a4a"/></linearGradient><filter id="bl" x="-20%" y="-40%" width="140%" height="180%"><feGaussianBlur stdDeviation="1.1"/></filter><filter id="bl2" x="-20%" y="-40%" width="140%" height="180%"><feGaussianBlur stdDeviation="0.45"/></filter><filter id="bl3" x="-20%" y="-40%" width="140%" height="180%"><feGaussianBlur stdDeviation="0.35"/></filter></defs>
<path d="M1021.400 404h66.500v33.500h-66.500z" fill="url(#gOff)"/><path d="M1021.400 437.400v31.500l78-3.400l-6-8z" fill="url(#gSide)"/><path d="M1021.400 437.400h66.500l11.200 28.100h-72.700z" fill="url(#gOn)"/><text x="1055" y="427.400" font-family='"Liberation Sans",sans-serif' font-size="15" font-weight="700" fill="#ff5050" text-anchor="middle" textLength="56" lengthAdjust="spacingAndGlyphs" filter="url(#bl)" stroke="#ff6060" stroke-width="1.200">OFF</text><text x="1055" y="427.400" font-family='"Liberation Sans",sans-serif' font-size="15" font-weight="700" fill="#b80404" text-anchor="middle" textLength="55" lengthAdjust="spacingAndGlyphs" filter="url(#bl3)">OFF</text><text x="1058" y="456" font-family='"Liberation Sans",sans-serif' font-size="12.700" font-weight="700" fill="#050505" text-anchor="middle" textLength="40" lengthAdjust="spacingAndGlyphs" filter="url(#bl2)" stroke="#050505" stroke-width="0.500">ON</text>
<g shape-rendering="crispEdges" stroke="#fff" stroke-width="1" fill="none"><rect x="1160.500" y="230.500" width="533.0" height="231"/><path d="M1228.5 230.500V464.500"/><path d="M1294.5 230.500V464.500"/><path d="M1361.5 230.500V464.500"/><path d="M1428.5 230.500V464.500"/><path d="M1494.5 230.500V464.500"/><path d="M1561.5 230.500V464.500"/><path d="M1627.5 230.500V464.500"/><path d="M1160.500 461.500v3"/><path d="M1156.500 365.5H1693.5"/><path d="M1156.500 269.5H1693.5"/><path d="M1157 460.500h4"/></g>
<g stroke-width="1.600" fill="none" stroke-dasharray="4.500 1.600"><path d="M1162 307.500H1693.5" stroke="#ff0808"/><path d="M1162 384.500H1693.5" stroke="#ff0808"/><path d="M1162 345.700H1693.5" stroke="#08f408"/></g>
<polyline points="1161.2,388.5 1163.9,384.1 1166.5,379.8 1169.2,375.8 1171.9,372.1 1174.5,368.5 1177.2,365.1 1179.8,361.9 1182.5,358.9 1185.2,356.1 1187.8,353.4 1190.5,350.9 1193.2,348.5 1195.8,346.3 1198.5,344.1 1201.2,342.1 1203.8,340.2 1206.5,338.4 1209.2,336.7 1211.8,335.1 1214.5,333.6 1217.1,332.2 1219.8,330.8 1222.5,329.6 1225.1,328.4 1227.8,327.2 1230.5,326.1 1233.1,325.1 1235.8,324.2 1238.5,323.3 1241.1,322.4 1243.8,321.6 1246.4,320.8 1249.1,320.1 1251.8,319.4 1254.4,318.8 1257.1,318.2 1259.8,317.6 1262.4,317.1 1265.1,316.6 1267.8,316.1 1270.4,315.6 1273.1,315.2 1275.8,314.8 1278.4,314.4 1281.1,314.1 1283.7,313.7 1286.4,313.4 1289.1,313.1 1291.7,312.8 1294.4,312.5 1297.1,312.3 1299.7,312.0 1302.4,311.8 1305.1,311.6 1307.7,311.4 1310.4,311.2 1313.0,311.0 1315.7,310.8 1318.4,310.7 1321.0,307.8 1323.7,305.2 1326.4,302.7 1329.0,300.3 1331.7,298.0 1334.4,295.9 1337.0,293.9 1339.7,292.0 1342.4,290.3 1345.0,288.6 1347.7,287.0 1350.3,285.5 1353.0,284.0 1355.7,282.7 1358.3,281.4 1361.0,280.2 1363.7,279.1 1366.3,278.0 1369.0,277.0 1371.7,276.1 1374.3,275.2 1377.0,274.3 1379.6,273.5 1382.3,272.8 1385.0,272.1 1387.6,271.4 1390.3,270.7 1393.0,270.1 1395.6,269.6 1398.3,269.0 1401.0,268.5 1403.6,268.1 1406.3,267.6 1409.0,267.2 1411.6,266.8 1414.3,266.4 1416.9,266.0 1419.6,265.7 1422.3,265.4 1424.9,265.1 1427.6,264.8 1430.3,264.5 1432.9,264.2 1435.6,264.0 1438.3,263.8 1440.9,267.8 1443.6,271.7 1446.2,275.3 1448.9,278.7 1451.6,281.9 1454.2,284.9 1456.9,287.8 1459.6,290.5 1462.2,293.1 1464.9,295.5 1467.6,297.8 1470.2,300.0 1472.9,302.0 1475.6,303.9 1478.2,305.8 1480.9,307.5 1483.5,309.1 1486.2,310.6 1488.9,312.1 1491.5,313.5 1494.2,314.7 1496.9,316.0 1499.5,317.1 1502.2,318.2 1504.9,319.2 1507.5,320.2 1510.2,321.1 1512.8,322.0 1515.5,322.8 1518.2,323.6 1520.8,324.3 1523.5,325.0 1526.2,325.6 1528.8,326.3 1531.5,326.8 1534.2,327.4 1536.8,327.9 1539.5,328.4 1542.2,328.9 1544.8,329.3 1547.5,329.7 1550.1,330.1 1552.8,330.5 1555.5,330.8 1558.1,331.1 1560.8,331.4 1563.5,331.7 1566.1,332.0 1568.8,332.3 1571.5,332.5 1574.1,332.7 1576.8,333.0 1579.4,333.2 1582.1,333.4 1584.8,333.6 1587.4,333.7 1590.1,333.9 1592.8,334.1 1595.4,334.2 1598.1,334.3 1600.8,334.5 1603.4,334.6 1606.1,334.7 1608.8,334.8 1611.4,334.9 1614.1,335.0 1616.7,335.1 1619.4,335.2 1622.1,335.3 1624.7,335.4 1627.4,335.4 1630.1,335.5 1632.7,335.6 1635.4,335.6 1638.1,335.7 1640.7,335.8 1643.4,335.8 1646.0,335.9 1648.7,335.9 1651.4,335.9 1654.0,336.0 1656.7,336.0 1659.4,336.1 1662.0,336.1 1664.7,336.1 1667.4,336.2 1670.0,336.2 1672.7,336.2 1675.4,336.2 1678.0,336.3 1680.7,336.3 1683.3,336.3 1686.0,336.3 1688.7,336.4 1691.3,336.4" fill="none" stroke="#f8f800" stroke-width="2.100" stroke-linejoin="round"/>
<g shape-rendering="crispEdges" stroke="#fff" stroke-width="1" fill="none"><rect x="1168.500" y="509.500" width="525.0" height="218"/><path d="M1235.5 509.500V730.500"/><path d="M1301.5 509.500V730.500"/><path d="M1367.5 509.500V730.500"/><path d="M1432.5 509.500V730.500"/><path d="M1498.5 509.500V730.500"/><path d="M1564.5 509.500V730.500"/><path d="M1629.5 509.500V730.500"/><path d="M1168.500 727.500v3"/><path d="M1164.500 618.500H1693.5"/><path d="M1164.500 509.500h4M1164.500 727.500h4"/></g>
<polyline points="1169.5,683.8 1172.1,683.8 1174.8,683.8 1177.4,683.8 1180.0,683.8 1182.6,683.8 1185.3,683.8 1187.9,683.8 1190.5,683.8 1193.2,683.8 1195.8,683.8 1198.4,683.8 1201.0,683.8 1203.7,683.8 1206.3,683.8 1208.9,683.8 1211.5,683.8 1214.2,683.8 1216.8,683.8 1219.4,683.8 1222.1,683.8 1224.7,683.8 1227.3,683.8 1229.9,683.8 1232.6,683.8 1235.2,683.8 1237.8,683.8 1240.5,683.8 1243.1,683.8 1245.7,683.8 1248.3,683.8 1251.0,683.8 1253.6,683.8 1256.2,683.8 1258.9,683.8 1261.5,683.8 1264.1,683.8 1266.7,683.8 1269.4,683.8 1272.0,683.8 1274.6,683.8 1277.2,683.8 1279.9,683.8 1282.5,683.8 1285.1,683.8 1287.8,683.8 1290.4,683.8 1293.0,683.8 1295.6,683.8 1298.3,683.8 1300.9,683.8 1303.5,683.8 1306.2,683.8 1308.8,683.8 1311.4,683.8 1314.0,683.8 1316.7,683.8 1319.3,683.8 1321.9,683.8 1324.6,683.8 1327.2,672.9 1329.8,672.9 1332.4,672.9 1335.1,672.9 1337.7,672.9 1340.3,672.9 1342.9,672.9 1345.6,672.9 1348.2,672.9 1350.8,672.9 1353.5,672.9 1356.1,672.9 1358.7,672.9 1361.3,672.9 1364.0,672.9 1366.6,672.9 1369.2,672.9 1371.9,672.9 1374.5,672.9 1377.1,672.9 1379.7,672.9 1382.4,672.9 1385.0,672.9 1387.6,672.9 1390.3,672.9 1392.9,672.9 1395.5,672.9 1398.1,672.9 1400.8,672.9 1403.4,672.9 1406.0,672.9 1408.6,672.9 1411.3,672.9 1413.9,672.9 1416.5,672.9 1419.2,672.9 1421.8,672.9 1424.4,672.9 1427.0,672.9 1429.7,672.9 1432.3,672.9 1434.9,672.9 1437.6,672.9 1440.2,672.9 1442.8,672.9 1445.4,690.3 1448.1,690.3 1450.7,690.3 1453.3,690.3 1456.0,690.3 1458.6,690.3 1461.2,690.3 1463.8,690.3 1466.5,690.3 1469.1,690.3 1471.7,690.3 1474.3,690.3 1477.0,690.3 1479.6,690.3 1482.2,690.3 1484.9,690.3 1487.5,690.3 1490.1,690.3 1492.7,690.3 1495.4,690.3 1498.0,690.3 1500.6,690.3 1503.3,690.3 1505.9,690.3 1508.5,690.3 1511.1,690.3 1513.8,690.3 1516.4,690.3 1519.0,690.3 1521.7,690.3 1524.3,690.3 1526.9,690.3 1529.5,690.3 1532.2,690.3 1534.8,690.3 1537.4,690.3 1540.0,690.3 1542.7,690.3 1545.3,690.3 1547.9,690.3 1550.6,690.3 1553.2,690.3 1555.8,690.3 1558.4,690.3 1561.1,690.3 1563.7,690.3 1566.3,690.3 1569.0,690.3 1571.6,690.3 1574.2,690.3 1576.8,690.3 1579.5,690.3 1582.1,690.3 1584.7,690.3 1587.4,690.3 1590.0,690.3 1592.6,690.3 1595.2,690.3 1597.9,690.3 1600.5,690.3 1603.1,690.3 1605.7,690.3 1608.4,690.3 1611.0,690.3 1613.6,690.3 1616.3,690.3 1618.9,690.3 1621.5,690.3 1624.1,690.3 1626.8,690.3 1629.4,690.3 1632.0,690.3 1634.7,690.3 1637.3,690.3 1639.9,690.3 1642.5,690.3 1645.2,690.3 1647.8,690.3 1650.4,690.3 1653.1,690.3 1655.7,690.3 1658.3,690.3 1660.9,690.3 1663.6,690.3 1666.2,690.3 1668.8,690.3 1671.4,690.3 1674.1,690.3 1676.7,690.3 1679.3,690.3 1682.0,690.3 1684.6,690.3 1687.2,690.3 1689.8,690.3 1692.5,690.3" fill="none" stroke="#f8f800" stroke-width="2.100" stroke-linejoin="round"/>
<path d="M1662.500 782h9l-4.500 4.500z" fill="#000"/>
<path d="M1683 779.500l8 8M1691 779.500l-8 8" stroke="#000" stroke-width="2.200" fill="none"/>
<path d="M1685.500 807l4-4l4 4M1685.500 880.500l4 4l4-4" fill="none" stroke="#5a5a5a" stroke-width="1.800"/>
<rect x="818" y="898" width="1.600" height="14" fill="#555"/><rect x="819.600" y="898" width="9" height="14" fill="#dcdcdc"/>
<rect x="867" y="899" width="15" height="12" fill="#222"/><path d="M869.500 902l3 3l-3 3M874 908.500h5" stroke="#fff" stroke-width="1.300" fill="none"/>
<g><rect x="933" y="899" width="2" height="2" fill="#e02020"/><rect x="933" y="903" width="2" height="2" fill="#20a020"/><rect x="933" y="907" width="2" height="2" fill="#20a020"/><rect x="933" y="911" width="2" height="2" fill="#e02020"/><path d="M937 900h10M937 904h10M937 908h10M937 912h10" stroke="#222" stroke-width="1.600"/></g>
<rect x="997.500" y="899.500" width="13" height="10" fill="#fff" stroke="#222" stroke-width="1.400"/><path d="M1004 900v9.500" stroke="#222" stroke-width="1.200"/><path d="M998 901h12M998 908.500h12" stroke="#222" stroke-width="1.600" stroke-dasharray="1.200 1"/>
</svg>
<span class="t" style="top:5.70px;font-size:12px;color:#000;letter-spacing:-0.068px;left:28.34px;">Aurora Vision Studio 5.2 Professional + Parallel Add-on - ModbusExample_Advanced.avproj</span>
<span class="t" style="top:37.50px;font-size:12px;color:#000;letter-spacing:0.187px;left:14.04px;"><u>F</u>ile</span>
<span class="t" style="top:37.50px;font-size:12px;color:#000;letter-spacing:0.406px;left:51.04px;"><u>E</u>dit</span>
<span class="t" style="top:37.50px;font-size:12px;color:#000;letter-spacing:0.315px;left:90.04px;"><u>P</u>rogram</span>
<span class="t" style="top:37.50px;font-size:12px;color:#000;letter-spacing:0.369px;left:155.04px;"><u>V</u>iew</span>
<span class="t" style="top:37.50px;font-size:12px;color:#000;letter-spacing:0.476px;left:199.04px;"><u>T</u>ools</span>
<span class="t" style="top:37.50px;font-size:12px;color:#000;letter-spacing:0.744px;left:246.04px;"><u>H</u>elp</span>
<span class="t" style="top:38.00px;font-size:14px;color:#fff;letter-spacing:0.023px;left:1472.88px;">ONLINE</span>
<span class="t" style="top:38.00px;font-size:12px;color:#000;letter-spacing:-0.153px;left:1572.04px;">Expert</span>
<span class="t" style="top:38.00px;font-size:12px;color:#000;letter-spacing:0.093px;left:1645.04px;">English</span>
<span class="t" style="top:67.50px;font-size:12px;color:#000;letter-spacing:0.968px;left:195.04px;">Main</span>
<span class="t" style="top:68.50px;font-size:19px;color:#3f454a;left:1028.01px;">?</span>
<span class="t" style="top:95.00px;font-size:12px;color:#000;letter-spacing:-0.630px;left:5.04px;">Project Explorer</span>
<span class="t" style="top:144.00px;font-size:11.6px;color:#111;letter-spacing:-0.215px;left:18.07px;">ModbusExample_Advanced</span>
<span class="t" style="top:164.00px;font-size:11.6px;color:#111;font-weight:700;left:45.07px;transform:scaleX(1.1272);transform-origin:0 50%;">Main*</span>
<span class="t" style="top:184.00px;font-size:11.6px;color:#111;letter-spacing:0.133px;left:45.07px;">MainLoop</span>
<span class="t" style="top:204.50px;font-size:11.6px;color:#111;letter-spacing:-0.557px;left:53.07px;">IO_ERROR handler (MainLoop)</span>
<span class="t" style="top:224.00px;font-size:11.6px;color:#111;letter-spacing:-0.310px;left:45.07px;">ModbusTCP_ReadWrite</span>
<span class="t" style="top:244.00px;font-size:11.6px;color:#111;letter-spacing:-0.045px;left:45.07px;">ModelOutputGeneration</span>
<span class="t" style="top:264.50px;font-size:11.6px;color:#111;letter-spacing:-0.369px;left:53.07px;">ModelOutputGeneration(False)</span>
<span class="t" style="top:284.50px;font-size:11.6px;color:#111;letter-spacing:-0.308px;left:53.07px;">ModelOutputGeneration(True)</span>
<span class="t" style="top:304.00px;font-size:11.6px;color:#111;letter-spacing:-0.170px;left:45.07px;">UpdateDisplaysOnHMI</span>
<span class="t" style="top:324.00px;font-size:11.6px;color:#111;letter-spacing:-0.173px;left:45.07px;">UpdateStatusLabel</span>
<span class="t" style="top:184.00px;font-size:11.5px;color:#555;left:276.00px;">1</span>
<span class="t" style="top:224.00px;font-size:11.5px;color:#555;left:276.00px;">1</span>
<span class="t" style="top:244.00px;font-size:11.5px;color:#555;left:276.00px;">1</span>
<span class="t" style="top:304.00px;font-size:11.5px;color:#555;left:276.00px;">1</span>
<span class="t" style="top:324.00px;font-size:11.5px;color:#555;left:276.00px;">3</span>
<span class="t" style="top:480.80px;font-size:12px;color:#6a6a6a;letter-spacing:-0.490px;left:23.04px;">Toolb..</span>
<span class="t" style="top:480.80px;font-size:12px;color:#6a6a6a;letter-spacing:-0.577px;left:80.04px;">HMI Contr..</span>
<span class="t" style="top:480.80px;font-size:12px;color:#000;letter-spacing:-0.544px;left:158.04px;">Project Expl...</span>
<span class="t" style="top:480.80px;font-size:12px;color:#6a6a6a;letter-spacing:-0.469px;left:248.04px;">Workspa...</span>
<span class="t" style="top:509.00px;font-size:12px;color:#000;letter-spacing:-0.731px;left:5.04px;">Properties - (1)MainLoop</span>
<span class="t" style="top:530.00px;font-size:12px;color:#111;letter-spacing:-0.365px;left:52.04px;">Name</span>
<span class="t" style="top:530.00px;font-size:12px;color:#111;letter-spacing:0.027px;left:194.54px;">Value</span>
<span class="t" style="top:845.70px;font-size:13px;color:#000;font-weight:700;left:25.96px;transform:scaleX(1.0601);transform-origin:0 50%;">MainLoop</span>
<span class="t" style="top:867.00px;font-size:12px;color:#111;letter-spacing:-0.156px;left:6.04px;">Public Task macrofilter.</span>
<span class="t" style="top:895.00px;font-size:12px;color:#0000ee;letter-spacing:-0.284px;left:236.04px;"><u>Show help...</u></span>
<span class="t" style="top:95.00px;font-size:12px;color:#000;letter-spacing:-0.662px;left:314.04px;">Program Editor - Test</span>
<span class="t" style="top:118.70px;font-size:12px;color:#000;font-weight:700;left:357.74px;transform:scaleX(1.0211);transform-origin:0 50%;">Main</span>
<span class="t" style="top:119.00px;font-size:12px;color:#111;font-family:'Liberation Mono',monospace;left:392.00px;transform:scaleX(0.9163);transform-origin:0 50%;">IO</span>
<span class="t" style="top:149.10px;font-size:10px;color:#f4f4f4;font-weight:700;left:328.20px;transform:scaleX(1.3370);transform-origin:0 50%;">INITIALIZE</span>
<span class="t" style="top:197.10px;font-size:10px;color:#f4f4f4;font-weight:700;left:328.20px;transform:scaleX(1.2054);transform-origin:0 50%;">ACQUIRE</span>
<span class="t" style="top:276.10px;font-size:10px;color:#f4f4f4;font-weight:700;left:328.20px;transform:scaleX(1.1164);transform-origin:0 50%;">PROCESS</span>
<span class="t" style="top:396.10px;font-size:10px;color:#f4f4f4;font-weight:700;left:328.20px;transform:scaleX(1.2800);transform-origin:0 50%;">FINALIZE</span>
<span class="t" style="top:214.50px;font-size:12px;color:#fff;font-weight:700;left:508.04px;transform:scaleX(1.1230);transform-origin:0 50%;">0. Loop</span>
<span class="t" style="top:232.70px;font-size:11px;color:#222;letter-spacing:-0.049px;left:670.12px;">inShouldLoop</span>
<span class="t" style="top:253.30px;font-size:11px;color:#222;letter-spacing:0.095px;left:699.62px;">inDelay</span>
<span class="t" style="top:232.50px;font-size:11px;color:#c2cde0;letter-spacing:0.847px;left:752.12px;">True</span>
<span class="t" style="top:253.00px;font-size:11px;color:#c2cde0;left:753.00px;">0</span>
<span class="t" style="top:293.50px;font-size:12px;color:#fff;font-weight:700;left:494.04px;transform:scaleX(1.0989);transform-origin:0 50%;">1. MainLoop</span>
<span class="t" style="top:94.70px;font-size:12px;color:#000;font-weight:700;left:834.54px;transform:scaleX(1.0526);transform-origin:0 50%;">HMI - Test</span>
<span class="t" style="top:133.20px;font-size:26.6px;color:#fff;letter-spacing:0.289px;left:947.87px;">Control of the temperature level using ModbusTCP</span>
<span class="t" style="top:181.50px;font-size:20px;color:#fff;letter-spacing:0.901px;left:871.25px;">Model parameters</span>
<span class="t" style="top:219.50px;font-size:26.6px;color:#fff;letter-spacing:0.502px;left:828.87px;">Parameter k:</span>
<span class="t" style="top:218.30px;font-size:26px;color:#000;letter-spacing:2.652px;left:1024.32px;">2.5</span>
<span class="t" style="top:258.30px;font-size:26.6px;color:#fff;letter-spacing:0.864px;left:825.37px;">Parameter T:</span>
<span class="t" style="top:256.00px;font-size:26px;color:#000;letter-spacing:1.002px;left:1026.92px;">1.8</span>
<span class="t" style="top:298.00px;font-size:26.6px;color:#fff;letter-spacing:0.471px;left:819.87px;">Parameter dt:</span>
<span class="t" style="top:296.30px;font-size:26px;color:#000;letter-spacing:1.735px;left:1022.92px;">100</span>
<span class="t" style="top:336.50px;font-size:26.6px;color:#fff;letter-spacing:0.484px;left:827.57px;">Parameter u:</span>
<span class="t" style="top:334.50px;font-size:26px;color:#000;letter-spacing:1.284px;left:1018.92px;">17.0</span>
<span class="t" style="top:372.50px;font-size:20px;color:#fff;letter-spacing:0.862px;left:842.15px;">Status and mode choice</span>
<span class="t" style="top:409.00px;font-size:23.5px;color:#fff;letter-spacing:0.347px;left:830.82px;">Status</span>
<span class="t" style="top:447.20px;font-size:21.3px;color:#000;letter-spacing:0.506px;left:832.90px;">Offline</span>
<span class="t" style="top:414.90px;font-size:24px;color:#fff;letter-spacing:0.617px;left:932.68px;">Offline</span>
<span class="t" style="top:443.30px;font-size:24px;color:#fff;letter-spacing:0.653px;left:932.68px;">Online</span>
<span class="t" style="top:486.50px;font-size:20px;color:#fff;letter-spacing:0.922px;left:899.40px;">Notifications</span>
<span class="t" style="top:558.50px;font-size:33.3px;color:#000;letter-spacing:0.027px;left:892.14px;">In Range</span>
<span class="t" style="top:648.20px;font-size:21.3px;color:#fff;letter-spacing:0.466px;left:820.60px;">Temperature:</span>
<span class="t" style="top:648.20px;font-size:21.3px;color:#000;letter-spacing:0.451px;left:993.30px;">42.58°C</span>
<span class="t" style="top:724.00px;font-size:21.3px;color:#fff;letter-spacing:0.376px;left:847.60px;">Control:</span>
<span class="t" style="top:724.00px;font-size:21.3px;color:#000;letter-spacing:0.342px;left:999.10px;">17.00V</span>
<span class="t" style="top:265.80px;font-size:12.5px;color:#f4f4f4;left:1141.20px;transform:scaleX(1.0139);transform-origin:0 50%;">60</span>
<span class="t" style="top:355.60px;font-size:12.5px;color:#f4f4f4;left:1141.20px;transform:scaleX(1.0139);transform-origin:0 50%;">35</span>
<span class="t" style="top:444.50px;font-size:12.5px;color:#f4f4f4;left:1141.20px;transform:scaleX(1.0139);transform-origin:0 50%;">10</span>
<span class="t" style="top:462.60px;font-size:12.5px;color:#f4f4f4;left:1159.80px;transform:scaleX(1.1793);transform-origin:0 50%;">0</span>
<span class="t" style="top:462.60px;font-size:12.5px;color:#f4f4f4;left:1221.45px;transform:scaleX(1.0139);transform-origin:0 50%;">25</span>
<span class="t" style="top:462.60px;font-size:12.5px;color:#f4f4f4;left:1287.45px;transform:scaleX(1.0139);transform-origin:0 50%;">50</span>
<span class="t" style="top:462.60px;font-size:12.5px;color:#f4f4f4;left:1354.45px;transform:scaleX(1.0139);transform-origin:0 50%;">75</span>
<span class="t" style="top:462.60px;font-size:12.5px;color:#f4f4f4;left:1418.60px;transform:scaleX(0.9492);transform-origin:0 50%;">100</span>
<span class="t" style="top:462.60px;font-size:12.5px;color:#f4f4f4;left:1484.60px;transform:scaleX(0.9492);transform-origin:0 50%;">125</span>
<span class="t" style="top:462.60px;font-size:12.5px;color:#f4f4f4;left:1551.60px;transform:scaleX(0.9492);transform-origin:0 50%;">150</span>
<span class="t" style="top:462.60px;font-size:12.5px;color:#f4f4f4;left:1617.60px;transform:scaleX(0.9492);transform-origin:0 50%;">175</span>
<span class="t" style="top:476.80px;font-size:12.5px;color:#f4f4f4;left:1406.00px;transform:scaleX(0.9298);transform-origin:0 50%;">Iteration</span>
<span class="t" style="top:335.50px;font-size:12.5px;color:#f4f4f4;left:1077.19px;transform:rotate(-90deg) scaleX(0.8983);transform-origin:50% 50%;">Temperature [°C]</span>
<span class="t" style="top:192.20px;font-size:27px;color:#e4e4e4;font-family:'Liberation Serif',serif;letter-spacing:0.586px;left:1208.40px;"><i>y</i><span style="font-size:25px">(</span><i>t</i> <span style="font-size:31px;position:relative;top:1.500px">+</span> <i>dt</i><span style="font-size:25px">)</span> <span style="font-size:31px;position:relative;top:1.500px">=</span> <i>y</i><span style="font-size:25px">(</span><i>t</i><span style="font-size:25px">)</span> <span style="font-size:31px;position:relative;top:1.500px">+</span></span>
<span class="t" style="top:175.00px;font-size:27px;color:#e4e4e4;font-family:'Liberation Serif',serif;letter-spacing:0.984px;left:1406.80px;"><i>dt</i></span>
<span class="t" style="top:208.50px;font-size:27px;color:#e4e4e4;font-family:'Liberation Serif',serif;left:1409.98px;clip-path:inset(0 0 1.300px 0);"><i>T</i></span>
<span class="t" style="top:192.20px;font-size:27px;color:#e4e4e4;font-family:'Liberation Serif',serif;letter-spacing:0.347px;left:1432.00px;"><span style="font-size:25px">(</span><i>k</i> <span style="font-size:18px;position:relative;top:-1px">∗</span> <i>u</i><span style="font-size:25px">(</span><i>t</i><span style="font-size:25px">)</span> <span style="font-size:31px;position:relative;top:1.500px">−</span> <i>y</i><span style="font-size:25px">(</span><i>t</i><span style="font-size:25px">))</span></span>
<span class="t" style="top:506.80px;font-size:12.5px;color:#f4f4f4;left:1143.40px;transform:scaleX(0.9492);transform-origin:0 50%;">100</span>
<span class="t" style="top:608.30px;font-size:12.5px;color:#f4f4f4;left:1149.10px;transform:scaleX(1.0139);transform-origin:0 50%;">50</span>
<span class="t" style="top:710.60px;font-size:12.5px;color:#f4f4f4;left:1155.00px;transform:scaleX(1.1793);transform-origin:0 50%;">0</span>
<span class="t" style="top:728.80px;font-size:12.5px;color:#f4f4f4;left:1167.80px;transform:scaleX(1.1793);transform-origin:0 50%;">0</span>
<span class="t" style="top:728.80px;font-size:12.5px;color:#f4f4f4;left:1228.45px;transform:scaleX(1.0139);transform-origin:0 50%;">25</span>
<span class="t" style="top:728.80px;font-size:12.5px;color:#f4f4f4;left:1294.45px;transform:scaleX(1.0139);transform-origin:0 50%;">50</span>
<span class="t" style="top:728.80px;font-size:12.5px;color:#f4f4f4;left:1360.45px;transform:scaleX(1.0139);transform-origin:0 50%;">75</span>
<span class="t" style="top:728.80px;font-size:12.5px;color:#f4f4f4;left:1422.60px;transform:scaleX(0.9492);transform-origin:0 50%;">100</span>
<span class="t" style="top:728.80px;font-size:12.5px;color:#f4f4f4;left:1488.60px;transform:scaleX(0.9492);transform-origin:0 50%;">125</span>
<span class="t" style="top:728.80px;font-size:12.5px;color:#f4f4f4;left:1554.60px;transform:scaleX(0.9492);transform-origin:0 50%;">150</span>
<span class="t" style="top:728.80px;font-size:12.5px;color:#f4f4f4;left:1619.60px;transform:scaleX(0.9492);transform-origin:0 50%;">175</span>
<span class="t" style="top:742.80px;font-size:12.5px;color:#f4f4f4;left:1410.00px;transform:scaleX(0.9298);transform-origin:0 50%;">Iteration</span>
<span class="t" style="top:608.50px;font-size:12.5px;color:#f4f4f4;left:1070.77px;transform:rotate(-90deg) scaleX(0.8840);transform-origin:50% 50%;">Control Variable [V]</span>
<span class="t" style="top:774.00px;font-size:12px;color:#000;letter-spacing:-0.685px;left:816.04px;">Console</span>
<span class="t" style="top:795.60px;font-size:11px;color:#1a1a1a;font-family:'Liberation Mono',monospace;letter-spacing:-0.549px;left:820.12px;">Time</span>
<span class="t" style="top:795.60px;font-size:11px;color:#1a1a1a;font-family:'Liberation Mono',monospace;letter-spacing:-0.564px;left:905.12px;">Level</span>
<span class="t" style="top:795.60px;font-size:11px;color:#1a1a1a;font-family:'Liberation Mono',monospace;letter-spacing:-0.576px;left:975.12px;">Message</span>
<span class="t" style="top:814.50px;font-size:11px;color:#a0522d;font-family:'Liberation Mono',monospace;letter-spacing:-0.473px;left:816.12px;">2:02:08 PM</span>
<span class="t" style="top:814.50px;font-size:11px;color:#a0522d;font-family:'Liberation Mono',monospace;letter-spacing:-0.518px;left:901.12px;">Warning</span>
<span class="t" style="top:814.50px;font-size:11px;color:#a0522d;font-family:'Liberation Mono',monospace;letter-spacing:-0.571px;left:971.12px;">1 Tcp/Ip socket(s) left unclosed. Use TcpIp_Close to avoid this warning.</span>
<span class="t" style="top:834.50px;font-size:11px;color:#1a1a1a;font-family:'Liberation Mono',monospace;letter-spacing:-0.473px;left:816.12px;">2:02:08 PM</span>
<span class="t" style="top:834.50px;font-size:11px;color:#1a1a1a;font-family:'Liberation Mono',monospace;letter-spacing:-0.482px;left:901.12px;">Info</span>
<span class="t" style="top:834.50px;font-size:11px;color:#1a1a1a;font-family:'Liberation Mono',monospace;letter-spacing:-0.596px;left:971.12px;">[Main] Program execution stopped.</span>
<span class="t" style="top:854.50px;font-size:11px;color:#1a1a1a;font-family:'Liberation Mono',monospace;letter-spacing:-0.473px;left:816.12px;">2:03:17 PM</span>
<span class="t" style="top:854.50px;font-size:11px;color:#1a1a1a;font-family:'Liberation Mono',monospace;letter-spacing:-0.482px;left:901.12px;">Info</span>
<span class="t" style="top:854.50px;font-size:11px;color:#1a1a1a;font-family:'Liberation Mono',monospace;letter-spacing:-0.595px;left:971.12px;">[Main] Program initialized.</span>
<span class="t" style="top:895.50px;font-size:12px;color:#747474;letter-spacing:-0.606px;left:835.04px;">Hints</span>
<span class="t" style="top:895.50px;font-size:12px;color:#000;letter-spacing:-0.685px;left:885.04px;">Console</span>
<span class="t" style="top:895.50px;font-size:12px;color:#747474;letter-spacing:-0.683px;left:952.04px;">Results</span>
<span class="t" style="top:895.50px;font-size:12px;color:#747474;letter-spacing:-0.728px;left:1015.04px;">Filmstrip - Default</span>
<span class="t" style="top:895.00px;font-size:12px;color:#333;font-weight:700;left:820.83px;">?</span>
<span class="t" style="top:921.00px;font-size:12px;color:#f08a66;letter-spacing:0.024px;left:7.04px;">Running...</span>
<span class="t" style="top:921.00px;font-size:12px;color:#fff;letter-spacing:-0.090px;left:74.04px;">Main(1) → MainLoop(3)</span>
<span class="t" style="top:921.00px;font-size:12px;color:#fff;letter-spacing:0.147px;left:1282.04px;">Iterations per second: 0.00</span>
<span class="t" style="top:921.00px;font-size:12px;color:#fff;letter-spacing:0.065px;left:1444.04px;">Time elapsed: 43.65 s</span>
</body></html>
